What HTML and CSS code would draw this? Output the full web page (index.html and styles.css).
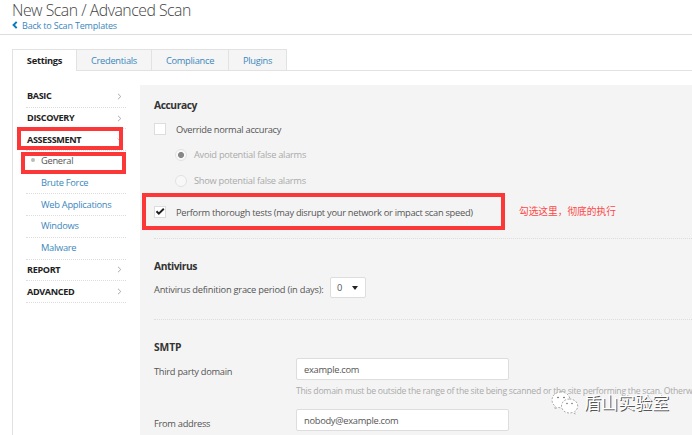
FILE: index.html
```html
<!DOCTYPE html>
<html lang="en">
<head>
<meta charset="utf-8">
<title>New Scan / Advanced Scan</title>
<link rel="stylesheet" href="styles.css">
</head>
<body>
<header class="header">
  <h1 class="title">New Scan / Advanced Scan</h1>
  <a class="back"><svg class="back-icon" viewBox="0 0 6 8"><path d="M4.700 .9 1.600 4l3.100 3.100" fill="none" stroke="currentColor" stroke-width="2"/></svg><span>Back to Scan Templates</span></a>
</header>
<nav class="tabs">
  <a class="tab tab-settings active">Settings</a>
  <a class="tab tab-credentials">Credentials</a>
  <a class="tab tab-compliance">Compliance</a>
  <a class="tab tab-plugins">Plugins</a>
</nav>
<div class="panel">
  <aside class="side">
    <a class="group"><span>BASIC</span><svg class="chev" viewBox="0 0 5 7"><path d="M1 .8 3.8 3.5 1 6.2"/></svg></a>
    <a class="group"><span>DISCOVERY</span><svg class="chev" viewBox="0 0 5 7"><path d="M1 .8 3.8 3.5 1 6.2"/></svg></a>
    <a class="group"><span>ASSESSMENT</span><svg class="chev" viewBox="0 0 7 5"><path d="M.8 1 3.5 3.8 6.2 1"/></svg><i class="mark mark-group"></i></a>
    <a class="item current">General<i class="mark mark-item"></i></a>
    <a class="item">Brute Force</a>
    <a class="item">Web Applications</a>
    <a class="item">Windows</a>
    <a class="item">Malware</a>
    <a class="group"><span>REPORT</span><svg class="chev" viewBox="0 0 5 7"><path d="M1 .8 3.8 3.5 1 6.2"/></svg></a>
    <a class="group"><span>ADVANCED</span><svg class="chev" viewBox="0 0 5 7"><path d="M1 .8 3.8 3.5 1 6.2"/></svg></a>
  </aside>
  <main class="main">
    <section class="accuracy">
      <h2>Accuracy</h2>
      <label class="check"><i class="box"></i><span>Override normal accuracy</span></label>
      <label class="radio"><i class="dot on"></i><span>Avoid potential false alarms</span></label>
      <label class="radio"><i class="dot"></i><span>Show potential false alarms</span></label>
      <div class="thorough">
        <label class="check"><i class="box"><svg viewBox="0 0 12 12"><path d="M2.5 5.3 4.8 7.6 9.8 2.700" fill="none" stroke="#222" stroke-width="2"/></svg></i><span>Perform thorough tests (may disrupt your network or impact scan speed)</span></label>
        <span class="note">勾选这里，彻底的执行</span>
        <i class="mark mark-thorough"></i>
      </div>
    </section>
    <section class="antivirus">
      <h2>Antivirus</h2>
      <div class="grace"><span class="grace-label">Antivirus definition grace period (in days):</span><span class="select">0<i class="caret"></i></span></div>
    </section>
    <section class="smtp">
      <h2 class="caps">SMTP</h2>
      <div class="field"><span class="label">Third party domain</span><div><div class="input">example.com</div><p class="help">This domain must be outside the range of the site being scanned or the site performing the scan. Otherwise</p></div></div>
      <div class="field"><span class="label">From address</span><div class="input">nobody@example.com</div></div>
    </section>
  </main>
</div>
<div class="watermark">
  <svg viewBox="0 0 28 24"><g fill="#fff" stroke="#888" stroke-width=".7" stroke-dasharray="2 1.500"><path d="M10 1C5 1 1 4.400 1 9c0 2.700 1.300 5 3.500 6.300L3.500 18l3.200-1.700c1 .3 2.200.5 3.300.5 5 0 9-3.500 9-7.900S15 1 10 1z"/><path d="M18.500 8c-4.500 0-8 3-8 7s3.500 7 8 7c1 0 2-.2 2.900-.5l3 1.500-.7-2.500c1.900-1.300 3-3.200 3-5.500 0-4-3.700-7-8.200-7z"/></g><g fill="#555"><circle cx="7" cy="6.500" r=".8"/><circle cx="13" cy="6.500" r=".8"/><circle cx="16" cy="12.500" r=".7"/><circle cx="21" cy="12.500" r=".7"/></g></svg>
  <span>盾山实验室</span>
</div>
</body>
</html>
```
FILE: styles.css
```css
* { box-sizing: border-box; }
body { margin: 0; width: 692px; height: 435px; overflow: hidden; position: relative; background: #fff; color: #555; font: 9.3px/14px "Open Sans", "Noto Sans CJK SC", sans-serif; letter-spacing: -.28px; white-space: nowrap; display: flex; flex-direction: column; }
h1, h2, p { margin: 0; }
i { display: block; }
a { color: #3a87bd; }
.header { flex: none; height: 35px; padding-left: 12px; border-bottom: 1px solid #ddd; }
.title { height: 20px; font-size: 15.8px; line-height: 21px; font-weight: 300; letter-spacing: -.48px; color: #444; }
.back { display: flex; align-items: center; height: 12px; gap: 4px; font-size: 9px; line-height: 12px; letter-spacing: -.18px; }
.back-icon { width: 6px; height: 8px; margin-top: -3px; color: #087bbd; }
.tabs { flex: none; display: flex; height: 22px; margin: 14px 0 0 12px; width: 275px; border: 1px solid #e2e2e2; border-bottom: 0; z-index: 1; }
.tab { height: 21px; line-height: 22px; text-align: center; background: #f5f5f5; border-left: 1px solid #e2e2e2; border-bottom: 1px solid #e2e2e2; }
.tab-settings { width: 63px; }
.tab-credentials { width: 75px; }
.tab-compliance { width: 77px; }
.tab-plugins { flex: 1; }
.tab.active { height: 22px; background: #fff; border: 0; color: #222; font-weight: 700; }
.panel { flex: none; display: flex; height: 365px; margin: -1px 0 0 12px; border: 1px solid #e2e2e2; border-width: 1px 0 0 1px; }
.side { width: 100px; margin: 14px 14px 0 13px; padding-top: 1px; }
.group, .item { position: relative; display: flex; height: 21.7px; align-items: center; border-bottom: 1px dotted #ddd; }
.group { justify-content: space-between; color: #222; font-weight: 700; font-size: 9.1px; letter-spacing: -.35px; padding-left: 1px; }
.item { padding-left: 15px; }
.item.current { color: #555; }
.current::before { content: ""; position: absolute; left: 5px; top: 7px; width: 4px; height: 4px; border-radius: 50%; background: #bbb; }
.chev { width: 5px; height: 7px; margin-right: 4px; fill: none; stroke: #aaa; }
.mark { position: absolute; border: 4px solid #fc3737; }
.mark-group { left: -9px; top: -2px; width: 106px; height: 23px; }
.mark-item { left: -5px; top: 1px; width: 105px; height: 22px; }
.main { flex: 1; overflow: hidden; margin-top: 14px; padding-left: 14px; background: #f4f4f4; }
h2 { height: 14px; font-size: 10.3px; line-height: 14px; font-weight: 700; letter-spacing: -.45px; color: #333; }
h2.caps { letter-spacing: -.1px; }
.accuracy { height: 154px; padding-top: 13px; border-bottom: 1px dotted #ddd; }
.check { display: flex; align-items: center; gap: 10px; height: 14px; }
.accuracy > .check { margin-top: 10px; }
.box { width: 12px; height: 12px; background: #fff; border: 1px solid #ddd; }
.box svg { display: block; width: 12px; height: 12px; margin: -1px; }
.check span { position: relative; top: 1px; }
.thorough .box { margin-top: -2px; }
.radio { display: flex; align-items: center; gap: 7px; height: 14px; margin: 12px 0 0 21px; color: #aaa; }
.dot { width: 12px; height: 12px; margin-top: -1px; border: 1px solid #e2e2e2; border-radius: 50%; background: #f8f8f8; }
.dot.on { background: radial-gradient(circle, #888 0 2.7px, #f8f8f8 3.3px); }
.thorough { position: relative; display: flex; align-items: center; height: 37px; margin-top: 6px; }
.thorough .check span { top: 0; }
.mark-thorough { left: -12px; top: -1px; width: 363px; height: 37px; }
.note { position: absolute; left: 365px; top: 11px; color: #fc4747; font-size: 9.7px; letter-spacing: 0; }
.antivirus { height: 81px; padding-top: 20px; border-bottom: 1px dotted #ddd; }
.grace { display: flex; height: 21px; align-items: center; gap: 7px; margin-top: 4px; }
.grace-label { width: 169px; padding-top: 5px; letter-spacing: -.23px; }
.select { display: flex; align-items: center; justify-content: space-between; width: 36px; height: 21px; padding: 0 7px 0 6px; background: #fff; border: 1px solid #ddd; border-radius: 2px; }
.caret { border: 3.5px solid transparent; border-top: 4px solid #222; border-bottom: 0; }
.smtp { padding-top: 20px; }
.field { display: grid; grid-template-columns: 142px 1fr; height: 51px; margin-top: 4px; }
.field + .field { margin-top: 0; }
.label { padding-top: 7px; }
.field + .field .label { padding-top: 8px; }
.input { width: 213px; height: 22px; padding-left: 7px; line-height: 21px; background: #fff; border: 1px solid #ddd; border-radius: 2px; }
.help { margin-top: 4px; font-size: 8.7px; letter-spacing: -.27px; color: #aaa; }
.watermark { position: absolute; left: 551px; top: 391px; display: flex; gap: 5px; color: #fff; font: 17px/24px "Noto Sans CJK SC", sans-serif; letter-spacing: 0; text-shadow: 1px 1px 0 #555; }
.watermark svg { width: 28px; height: 24px; }
.watermark span { margin-top: -1px; }
```
